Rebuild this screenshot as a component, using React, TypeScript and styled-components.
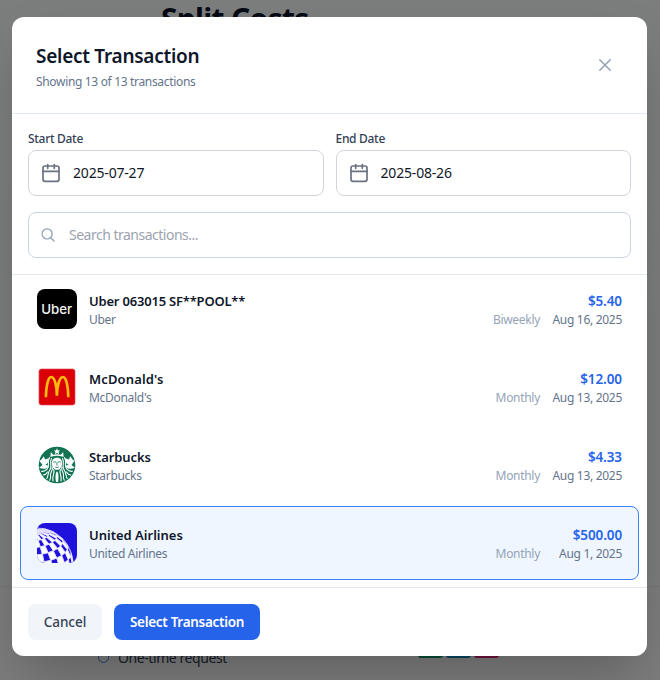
import React from "react";
import styled, { createGlobalStyle, css } from "styled-components";

const GlobalStyle = createGlobalStyle`
  *, *::before, *::after { box-sizing: border-box; }
  body {
    margin: 0;
    font-family: "Noto Sans", "Open Sans", sans-serif;
    color: #0f172a;
    overflow: hidden;
  }
  button, input { font: inherit; }
`;

const Screen = styled.div`
  position: relative;
  width: 100%;
  height: 100vh;
  min-height: 680px;
  overflow: hidden;
`;

const Page = styled.main`
  height: 680px;
  display: flex;
  flex-direction: column;
  background: linear-gradient(#f8fdfa, #f6faf8 70%, #f8fafc);
`;

const PageTitle = styled.h1`
  margin: 0;
  padding: 0 0 0 161px;
  height: 586px;
  font-size: 30px;
  line-height: 37px;
  font-weight: 700;
  letter-spacing: -0.7px;
`;

const PagePanel = styled.section`
  flex: 1;
  display: flex;
  justify-content: space-between;
  align-items: flex-start;
  padding: 61px 161px 0 98px;
  border-top: 1px solid #e8ebee;
  background: #f8f9f9;
`;

const PageOption = styled.label`
  display: flex;
  align-items: center;
  gap: 9px;
  font-size: 14px;
  line-height: 20px;
  letter-spacing: -0.42px;
  color: #334155;
`;

const Radio = styled.span`
  width: 11px;
  height: 11px;
  margin-top: -2px;
  border: 1.5px solid #3b82f6;
  border-radius: 50%;
`;

const Swatches = styled.div`
  display: flex;
  gap: 3px;
`;

const Swatch = styled.span<{ $color: string }>`
  width: 25px;
  height: 10px;
  border-radius: 3px;
  background: ${(p) => p.$color};
`;

const Overlay = styled.div`
  position: absolute;
  inset: 0;
  padding: 17px 13px 24px 12px;
  background: rgba(0, 0, 0, 0.5);
`;

const Dialog = styled.section`
  height: 639px;
  display: flex;
  flex-direction: column;
  border-radius: 12px;
  overflow: hidden;
  background: #fff;
  box-shadow: 0 25px 50px -12px rgba(0, 0, 0, 0.25);
`;

const Header = styled.header`
  height: 97px;
  flex: none;
  display: flex;
  justify-content: space-between;
  align-items: center;
  padding: 24px 32px 24px 24px;
  border-bottom: 1px solid #e2e8f0;
`;

const Title = styled.h2`
  margin: 2px 0 0;
  font-size: 19px;
  line-height: 28px;
  font-weight: 600;
  letter-spacing: -0.27px;
`;

const Subtitle = styled.p`
  margin: 3px 0 0;
  font-size: 12px;
  line-height: 18px;
  letter-spacing: -0.33px;
  color: #64748b;
`;

const CloseButton = styled.button`
  width: 20px;
  height: 20px;
  padding: 0;
  border: 0;
  background: none;
  color: #94a3b8;
  svg { display: block; }
`;

const Filters = styled.div`
  flex: none;
  height: 161px;
  padding: 16px;
  border-bottom: 1px solid #e2e8f0;
`;

const DateGrid = styled.div`
  display: grid;
  grid-template-columns: 1fr 1fr;
  gap: 12px;
  margin-bottom: 16px;
`;

const FieldLabel = styled.label`
  display: block;
  height: 20px;
  font-size: 12px;
  line-height: 18px;
  font-weight: 500;
  letter-spacing: -0.3px;
  color: #334155;
`;

const Field = styled.div<{ $search?: boolean }>`
  display: flex;
  align-items: center;
  height: 46px;
  border-radius: 8px;
  background: #fff;
  border: 1px solid ${(p) => (p.$search ? "#cbd5e1" : "#d1d5db")};
  padding-left: ${(p) => (p.$search ? 11 : 12)}px;
  gap: ${(p) => (p.$search ? 13 : 12)}px;
  svg { flex: none; }
`;

const FieldInput = styled.input`
  flex: 1;
  min-width: 0;
  padding: 0;
  border: 0;
  outline: 0;
  background: none;
  font-size: 14px;
  line-height: 20px;
  color: #111827;
  letter-spacing: -0.18px;
  &::placeholder {
    color: #9ca3af;
    opacity: 1;
    letter-spacing: -0.5px;
  }
`;

const List = styled.div`
  flex: 1;
  min-height: 0;
  overflow: hidden;
  display: flex;
  flex-direction: column;
  justify-content: flex-end;
  gap: 4px;
  padding: 0 8px 7px;
`;

const Row = styled.div<{ $selected?: boolean }>`
  flex: none;
  height: 74px;
  display: flex;
  align-items: center;
  gap: 12px;
  padding: 0 16px;
  border: 1px solid transparent;
  border-radius: 8px;
  ${(p) =>
    p.$selected &&
    css`
      border-color: #3b82f6;
      background: #eff6ff;
    `}
`;

const Logo = styled.div`
  width: 40px;
  height: 40px;
  border-radius: 8px;
  overflow: hidden;
  svg { display: block; }
`;

const Merchant = styled.div`
  flex: 1;
  display: flex;
  flex-direction: column;
  padding-top: 2px;
`;

const Name = styled.div<{ $tracking?: number }>`
  font-size: 13px;
  line-height: 20px;
  font-weight: 600;
  letter-spacing: ${(p) => p.$tracking ?? 0}px;
`;

const Detail = styled.div`
  font-size: 12px;
  line-height: 18px;
  letter-spacing: -0.3px;
  color: #64748b;
`;

const Summary = styled.div`
  display: flex;
  flex-direction: column;
  align-items: flex-end;
  padding-top: 2px;
`;

const Amount = styled(Name)`
  font-size: 13.5px;
  color: #2563eb;
`;

const Meta = styled(Detail)`
  display: flex;
  gap: 12px;
`;

const Frequency = styled.span`
  color: #94a3b8;
`;

const DateText = styled.span`
  min-width: 70px;
  text-align: right;
`;

const Footer = styled.footer`
  flex: none;
  height: 69px;
  display: flex;
  gap: 12px;
  padding: 16px;
  border-top: 1px solid #e2e8f0;
`;

const Button = styled.button<{ $primary?: boolean }>`
  width: ${(p) => (p.$primary ? 146 : 74)}px;
  height: 36px;
  padding: 0;
  border: 0;
  border-radius: 8px;
  white-space: nowrap;
  font-size: 13.5px;
  font-weight: ${(p) => (p.$primary ? 600 : 500)};
  letter-spacing: ${(p) => (p.$primary ? -0.3 : -0.05)}px;
  color: ${(p) => (p.$primary ? "#fff" : "#334155")};
  background: ${(p) => (p.$primary ? "#2563eb" : "#f1f5f9")};
`;

const CalendarIcon = () => (
  <svg width="20" height="20" viewBox="0 0 20 20" fill="none" stroke="#6b7280" strokeWidth="1.7" strokeLinecap="round">
    <rect x="2" y="3" width="16" height="15.3" rx="2" />
    <path d="M2 8.3h16M6.7 1.5v3.8M13.3 1.5v3.8" />
  </svg>
);

const SearchIcon = () => (
  <svg width="16" height="16" viewBox="0 0 24 24" fill="none" stroke="#94a3b8" strokeWidth="2.1" strokeLinecap="round">
    <path d="m21 21-5.2-5.2m0 0A7.5 7.5 0 1 0 5.2 5.2a7.5 7.5 0 0 0 10.6 10.6Z" />
  </svg>
);

const CloseIcon = () => (
  <svg width="20" height="20" viewBox="0 0 20 20" fill="none" stroke="#94a3b8" strokeWidth="1.6" strokeLinecap="round">
    <path d="m4.8 4.8 10.400 10.400M15.200 4.800 4.800 15.200" />
  </svg>
);

const UberLogo = () => (
  <svg width="40" height="40" viewBox="0 0 40 40">
    <rect width="40" height="40" fill="#000" />
    <text x="4.200" y="25.200" fill="#f4f4f4" fontFamily="Inter, sans-serif" fontSize="13.500" fontWeight="500" textLength="31" lengthAdjust="spacingAndGlyphs">
      Uber
    </text>
  </svg>
);

const McDonaldsLogo = () => (
  <svg width="40" height="40" viewBox="0 0 40 40">
    <rect x="1.7" y="1.7" width="36.6" height="36.6" rx="2.5" fill="#db0007" stroke="#f3c9d2" strokeWidth="0.7" />
    <path
      d="M8.900 30.3C9 20 10.900 10 14.300 10C17.500 10 19.900 18.500 19.900 28.800C19.900 18.500 22.700 10 25.900 10C29.300 10 31.200 20 31.300 30.300"
      fill="none"
      stroke="#ffbc0d"
      strokeWidth="2.7"
    />
  </svg>
);

const StarbucksLogo = () => (
  <svg width="40" height="40" viewBox="0 0 40 40">
    <circle cx="20" cy="20" r="18.3" fill="#127353" />
    <g fill="#fff">
      <path d="M20 3.2l1 2.2 2.3.2-1.7 1.5.5 2.2-2.1-1.2-2.1 1.2.5-2.2-1.7-1.5 2.3-.2z" />
      <path d="M13.8 7l2.4 2.7L20 9.2l3.8.5L26.2 7l.4 5.1-2.4-.9L20 10.8l-4.2.4-2.4.9z" />
      <path d="M2.2 15.5C4 15.7 5.2 13.500 6.800 11.200l1.200 3.300 3.700-1.300c.5 3-.8 5.300-3.400 6.600L12 21c-2.500 3.300-5.800 3.500-9.900 1.700l3.400-2.600z" />
      <path d="M37.8 15.5c-1.800.2-3-2-4.600-4.300L32 14.500l-3.700-1.300c-.5 3 .8 5.300 3.400 6.600L28 21c2.500 3.300 5.800 3.500 9.900 1.700l-3.400-2.600z" />
      <path d="M20 12.700c3.900 0 5.300 2.700 5.100 5.700-.2 3.600-2.100 6.400-5.100 6.400s-4.900-2.800-5.100-6.400c-.2-3 1.200-5.700 5.100-5.700z" />
    </g>
    <g fill="none" stroke="#fff" strokeWidth="1.1" strokeLinecap="round">
      <path d="M14.5 13.5c-2.7 4 1.4 7.8-1.6 11.5-2.5 3-1.3 5.8-3.1 8.5" />
      <path d="M25.5 13.5c2.7 4-1.4 7.800 1.600 11.500 2.500 3 1.300 5.800 3.100 8.500" />
      <path d="M15.2 22c1.400 3.800-2.700 5.500-1.700 9 .6 2-.2 3.200-.8 4.200" />
      <path d="M24.8 22c-1.400 3.800 2.700 5.500 1.700 9-.6 2 .2 3.200.8 4.200" />
      <path d="M16.7 24.5c1.300 4-1.700 5.500-.7 11.500M23.300 24.500c-1.300 4 1.700 5.500.7 11.500" />
      <path d="M12.5 12.600c-3 4.700 1 8.500-2.400 11.600-2 1.900-4 2.400-5.500 2M27.500 12.600c3 4.700-1 8.500 2.400 11.600 2 1.900 4 2.400 5.500 2" />
      <path d="M10.5 27c-1 2-2.500 2.800-4.300 3M29.500 27c1 2 2.500 2.800 4.300 3" />
    </g>
    <path d="M18.900 28c-.6 3-.5 6 .1 9h2c.6-3 .7-6 .1-9l-1.100-1.800z" fill="#fff" />
    <g fill="none" stroke="#127353" strokeLinecap="round">
      <path d="M16.500 17.100c.7-.5 1.500-.5 2.200 0M21.300 17.100c.7-.5 1.500-.5 2.200 0" strokeWidth=".9" />
      <path d="M19.900 17.500v2.700M18.500 22.200q1.500 1 3 0" strokeWidth=".8" />
    </g>
  </svg>
);

const GLOBE = { cx: 0, cy: 41, r: 36, tilt: 0.42, spin: -0.1 };

const project = (lat: number, lon: number) => {
  const { cx, cy, r, tilt, spin } = GLOBE;
  const x = Math.cos(lat) * Math.sin(lon);
  const y = Math.sin(lat);
  const z = Math.cos(lat) * Math.cos(lon);
  const ty = y * Math.cos(tilt) - z * Math.sin(tilt);
  const tz = y * Math.sin(tilt) + z * Math.cos(tilt);
  const sx = x * Math.cos(spin) + ty * Math.sin(spin);
  const sy = ty * Math.cos(spin) - x * Math.sin(spin);
  return { x: cx + r * sx, y: cy - r * sy, visible: tz > -0.05 };
};

const globeCells = () => {
  const cells: { d: string; solid: boolean }[] = [];
  const step = Math.PI / 14;
  for (let i = -4; i < 7; i++) {
    for (let j = -9; j < 11; j++) {
      const corners = [
        project(i * step, j * step),
        project(i * step, (j + 1) * step),
        project((i + 1) * step, (j + 1) * step),
        project((i + 1) * step, j * step),
      ];
      if (corners.every((p) => p.visible)) {
        cells.push({
          d: "M" + corners.map((p) => `${p.x.toFixed(2)} ${p.y.toFixed(2)}`).join("L") + "Z",
          solid: (i + j) % 2 === 0,
        });
      }
    }
  }
  return cells;
};

const CELLS = globeCells();

const UnitedLogo = () => (
  <svg width="40" height="40" viewBox="0 0 40 40">
    <rect width="40" height="40" fill="#1f12dc" />
    <circle cx={GLOBE.cx} cy={GLOBE.cy} r={GLOBE.r} fill="none" stroke="#d8d8ff" strokeWidth="0.7" />
    {CELLS.map((cell, i) => (
      <path key={i} d={cell.d} fill={cell.solid ? "#fff" : "none"} stroke="#e4e2ff" strokeWidth="0.7" />
    ))}
  </svg>
);

const transactions = [
  { name: "Uber 063015 SF**POOL**", tracking: -0.2, merchant: "Uber", amount: "$5.40", frequency: "Biweekly", date: "Aug 16, 2025", Icon: UberLogo },
  { name: "McDonald's", tracking: 0.15, merchant: "McDonald's", amount: "$12.00", frequency: "Monthly", date: "Aug 13, 2025", Icon: McDonaldsLogo },
  { name: "Starbucks", tracking: -0.1, merchant: "Starbucks", amount: "$4.33", frequency: "Monthly", date: "Aug 13, 2025", Icon: StarbucksLogo },
  { name: "United Airlines", tracking: 0, merchant: "United Airlines", amount: "$500.00", frequency: "Monthly", date: "Aug 1, 2025", Icon: UnitedLogo, selected: true },
];

export default function App() {
  return (
    <Screen>
      <GlobalStyle />
      <Page>
        <PageTitle>Split Costs</PageTitle>
        <PagePanel>
          <PageOption>
            <Radio />
            One-time request
          </PageOption>
          <Swatches>
            <Swatch $color="#059669" />
            <Swatch $color="#0891b2" />
            <Swatch $color="#db2777" />
          </Swatches>
        </PagePanel>
      </Page>
      <Overlay>
        <Dialog role="dialog" aria-modal="true">
          <Header>
            <div>
              <Title>Select Transaction</Title>
              <Subtitle>Showing 13 of 13 transactions</Subtitle>
            </div>
            <CloseButton aria-label="Close">
              <CloseIcon />
            </CloseButton>
          </Header>
          <Filters>
            <DateGrid>
              <div>
                <FieldLabel>Start Date</FieldLabel>
                <Field>
                  <CalendarIcon />
                  <FieldInput defaultValue="2025-07-27" />
                </Field>
              </div>
              <div>
                <FieldLabel>End Date</FieldLabel>
                <Field>
                  <CalendarIcon />
                  <FieldInput defaultValue="2025-08-26" />
                </Field>
              </div>
            </DateGrid>
            <Field $search>
              <SearchIcon />
              <FieldInput placeholder="Search transactions..." />
            </Field>
          </Filters>
          <List>
            {transactions.map(({ name, tracking, merchant, amount, frequency, date, Icon, selected }) => (
              <Row key={name} $selected={selected}>
                <Logo>
                  <Icon />
                </Logo>
                <Merchant>
                  <Name $tracking={tracking}>{name}</Name>
                  <Detail>{merchant}</Detail>
                </Merchant>
                <Summary>
                  <Amount $tracking={-0.1}>{amount}</Amount>
                  <Meta>
                    <Frequency>{frequency}</Frequency>
                    <DateText>{date}</DateText>
                  </Meta>
                </Summary>
              </Row>
            ))}
          </List>
          <Footer>
            <Button>Cancel</Button>
            <Button $primary>Select Transaction</Button>
          </Footer>
        </Dialog>
      </Overlay>
    </Screen>
  );
}
